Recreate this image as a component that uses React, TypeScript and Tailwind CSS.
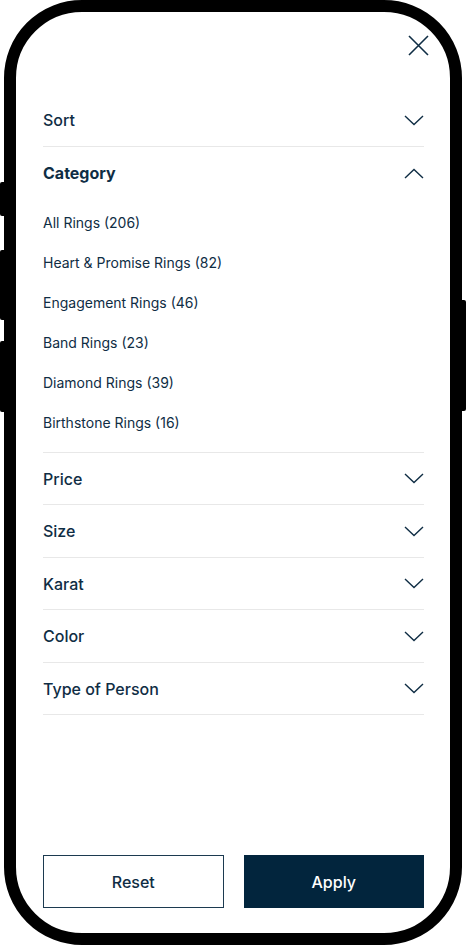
const categories = [
  "All Rings (206)",
  "Heart & Promise Rings (82)",
  "Engagement Rings (46)",
  "Band Rings (23)",
  "Diamond Rings (39)",
  "Birthstone Rings (16)",
];

const collapsed = ["Price", "Size", "Karat", "Color", "Type of Person"];

function Chevron({ up = false }: { up?: boolean }) {
  return (
    <svg width="20" height="11" viewBox="0 0 20 11" fill="none" className="shrink-0">
      <path
        d={up ? "M1 10L10 1.5L19 10" : "M1 1L10 9.5L19 1"}
        stroke="#0f2d44"
        strokeWidth="1.4"
      />
    </svg>
  );
}

function Row({ label }: { label: string }) {
  return (
    <div className="flex h-[52.5px] items-center justify-between border-b border-[#e8e8e8] pt-[1px]">
      <span className="text-[16px] font-medium text-[#0f2d44]">{label}</span>
      <Chevron />
    </div>
  );
}

export default function App() {
  return (
    <div
      className="relative h-[945px] w-[466px] overflow-hidden bg-white"
      style={{ fontFamily: "Inter, 'Noto Sans', sans-serif" }}
    >
      {/* side buttons */}
      <div className="absolute left-0 top-[182px] h-[34px] w-[6px] rounded-l-[2px] bg-black" />
      <div className="absolute left-0 top-[250px] h-[70px] w-[6px] rounded-l-[2px] bg-black" />
      <div className="absolute left-0 top-[341px] h-[71px] w-[6px] rounded-l-[2px] bg-black" />
      <div className="absolute right-0 top-[300px] h-[111px] w-[6px] rounded-r-[2px] bg-black" />

      {/* phone frame */}
      <div className="ml-[4px] flex h-[945px] w-[458px] flex-col rounded-[78px] border-[12px] border-black bg-white">
        <div className="flex h-[82px] justify-end pr-[21px] pt-[23px]">
          <svg width="21" height="21" viewBox="0 0 21 21" fill="none">
            <path d="M1 1L20 20M20 1L1 20" stroke="#0f2d44" strokeWidth="1.6" />
          </svg>
        </div>

        <div className="flex flex-1 flex-col pl-[27px] pr-[26px]">
          <Row label="Sort" />

          {/* Category */}
          <div className="border-b border-[#e8e8e8] pb-[9px]">
            <div className="flex h-[53px] items-center justify-between">
              <span className="text-[16px] font-bold text-[#0f2d44]">Category</span>
              <Chevron up />
            </div>
            <ul className="pt-[3px]">
              {categories.map((c) => (
                <li key={c} className="flex h-10 items-center text-[14px] text-[#0f2d44]">
                  {c}
                </li>
              ))}
            </ul>
          </div>

          {collapsed.map((l) => (
            <Row key={l} label={l} />
          ))}

          <div className="flex-1" />

          <div className="mb-[25px] grid grid-cols-2 gap-5">
            <button className="h-[53px] border border-[#1c3a50] text-[16px] font-medium text-[#0f2d44]">
              Reset
            </button>
            <button className="h-[53px] bg-[#02253d] text-[16px] font-medium text-white">
              Apply
            </button>
          </div>
        </div>
      </div>
    </div>
  );
}
